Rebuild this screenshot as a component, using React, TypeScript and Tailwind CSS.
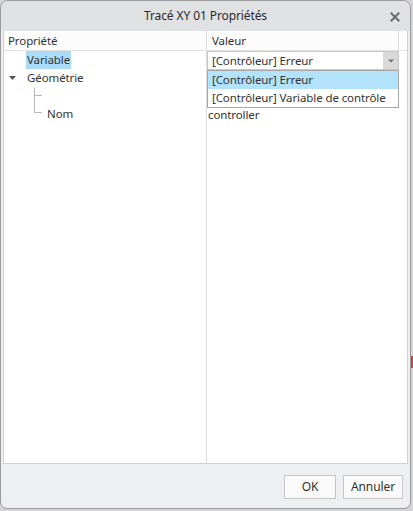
import React from "react";

export default function App() {
  const font = { fontFamily: '"Noto Sans", "Open Sans", sans-serif', letterSpacing: "-0.1px" };
  return (
    <div className="w-[413px] h-[511px] bg-[#d4d4d6] relative overflow-hidden" style={font}>
      <div className="absolute right-0 top-[356px] w-[2px] h-[12px] bg-[#d04040]" />
      <div className="w-[411px] h-[509px] flex flex-col bg-[#eeeff1] border border-[#9a9a9c] rounded-t-[8px] rounded-b-[7px] overflow-hidden text-[11.5px] text-[#333]">
        {/* Title bar */}
        <div className="h-[30px] shrink-0 bg-[#dfe1e3] flex items-center justify-center relative">
          <span className="text-[12px] text-[#2a2a2a]">Tracé XY 01 Propriétés</span>
          <svg width="10" height="10" viewBox="0 0 10 10" className="absolute right-[10px] top-[11px]">
            <path d="M1.5 1.5 L8.5 8.5 M8.5 1.5 L1.5 8.5" stroke="#6a6a6a" strokeWidth="2" strokeLinecap="square" />
          </svg>
        </div>
        {/* Table */}
        <div className="mx-[2px] h-[433px] bg-white border border-[#cfd0d2] border-t-0 relative flex flex-col">
          <div className="h-[20px] flex border-b border-[#e2e2e2] bg-[#fcfcfc]">
            <div className="w-[203px] border-r border-[#dcdcdc] pl-[4px] flex items-center">Propriété</div>
            <div className="w-[192px] border-r border-[#dcdcdc] pl-[5px] flex items-center">Valeur</div>
            <div className="flex-1" />
          </div>
          <div className="flex flex-1">
            <div className="w-[203px] border-r border-[#dcdcdc] flex flex-col">
              <div className="h-[18px] flex items-center pl-[22px]">
                <span className="bg-[#aadcfa] px-[1px] h-[18px] flex items-center">Variable</span>
              </div>
              <div className="h-[18px] flex items-center pl-[4px]">
                <svg width="10" height="8" viewBox="0 0 10 8" className="mr-[9px]">
                  <path d="M1 2 L8 2 L4.5 6 Z" fill="#555" />
                </svg>
                <span>Géométrie</span>
              </div>
              <div className="h-[18px] relative">
                <div className="absolute left-[30px] top-[1px] w-[1px] h-[25px] bg-[#b8b8b8]" />
                <div className="absolute left-[30px] top-[8px] w-[8px] h-[1px] bg-[#b8b8b8]" />
              </div>
              <div className="h-[18px] relative flex items-center pl-[43px]">
                <div className="absolute left-[30px] top-[7px] w-[8px] h-[1px] bg-[#b8b8b8]" />
                <span>Nom</span>
              </div>
            </div>
            <div className="w-[192px] flex flex-col">
              <div className="h-[19px] flex border border-[#c8c8c8] bg-white">
                <div className="flex-1 pl-[4px] flex items-center">[Contrôleur] Erreur</div>
                <div className="w-[15px] bg-[#d9d9d9] flex items-center justify-center">
                  <svg width="8" height="6" viewBox="0 0 8 6">
                    <path d="M1 1.5 L7 1.5 L4 4.5 Z" fill="#707070" />
                  </svg>
                </div>
              </div>
              <div className="h-[18px]" />
              <div className="h-[18px]" />
              <div className="h-[18px] flex items-center pl-[1px]">controller</div>
            </div>
            <div className="flex-1" />
          </div>
          {/* Dropdown list */}
          <div className="absolute left-[203px] top-[39px] w-[192px] border border-[#a8a8a8] bg-white flex flex-col">
            <div className="h-[18px] bg-[#b3e2fb] flex items-center pl-[4px]">[Contrôleur] Erreur</div>
            <div className="h-[18px] flex items-center pl-[4px]">[Contrôleur] Variable de contrôle</div>
          </div>
        </div>
        {/* Footer */}
        <div className="flex-1 flex justify-end items-start pt-[11px] pr-[7px] gap-[7px]">
          <button className="w-[52px] h-[24px] border border-[#c6c6c6] bg-[#fafafa] text-[12px] text-[#333] flex items-center justify-center">OK</button>
          <button className="w-[60px] h-[24px] border border-[#c6c6c6] bg-[#fafafa] text-[12px] text-[#333] flex items-center justify-center">Annuler</button>
        </div>
      </div>
    </div>
  );
}
